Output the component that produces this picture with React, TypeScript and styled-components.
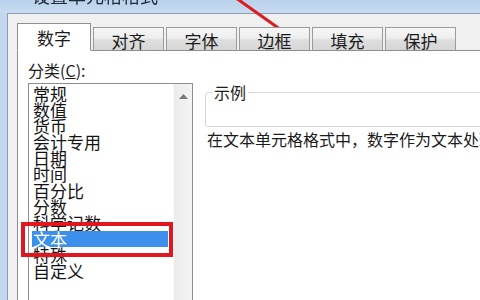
import React from "react";
import styled, { createGlobalStyle } from "styled-components";

const GlobalStyle = createGlobalStyle`
  html, body {
    margin: 0;
    padding: 0;
    width: 480px;
    height: 300px;
    overflow: hidden;
    background: #c9dcf0;
  }
  * { box-sizing: border-box; }
`;

const cjk = `"Noto Sans CJK SC", "Noto Sans", sans-serif`;

const Screen = styled.div`
  position: relative;
  width: 480px;
  height: 300px;
  overflow: hidden;
  font-family: ${cjk};
  color: #1b1b1b;
`;

const TitleBar = styled.div`
  height: 13px;
  overflow: hidden;
  padding-left: 32px;
  background: linear-gradient(#b9d1ea, #c8dcf1);
`;

const TitleText = styled.div`
  margin-top: -14px;
  font-size: 18px;
  line-height: 18px;
  color: #1e2a36;
  filter: blur(0.6px);
`;

const Frame = styled.div`
  display: flex;
  width: 540px;
  height: 287px;
  padding-left: 7px;
  background: linear-gradient(90deg, #c3d8ef, #d6e5f5);
`;

const Dialog = styled.div`
  flex: 1;
  display: flex;
  flex-direction: column;
  background: #f0f0f0;
  border-top: 1px solid #8d9cae;
  border-left: 1px solid #8d9cae;
  padding: 9px 0 0 9px;
`;

const TabRow = styled.div`
  display: flex;
  align-items: flex-end;
  gap: 2px;
  height: 28px;
  margin-bottom: -1px;
  position: relative;
  z-index: 1;
`;

const Tab = styled.div<{ $active?: boolean }>`
  width: ${(p) => (p.$active ? 74 : 71)}px;
  height: ${(p) => (p.$active ? 28 : 24)}px;
  display: flex;
  align-items: center;
  justify-content: center;
  font-size: 17px;
  line-height: 17px;
  padding-top: ${(p) => (p.$active ? 1 : 2)}px;
  border: 1px solid ${(p) => (p.$active ? "#8c8e94" : "#9a9b9d")};
  border-bottom: ${(p) => (p.$active ? "1px solid #ffffff" : "1px solid #8c8e94")};
  background: ${(p) =>
    p.$active ? "#ffffff" : "linear-gradient(#f6f6f6 0%, #eeeeee 45%, #dedede 55%, #d6d6d6 100%)"};
  color: #1b1b1b;
`;

const Panel = styled.div`
  flex: 1;
  display: flex;
  gap: 12px;
  background: #ffffff;
  border-top: 1px solid #8c8e94;
  border-left: 1px solid #8c8e94;
  padding: 11px 0 0 10px;
`;

const LeftCol = styled.div`
  display: flex;
  flex-direction: column;
  width: 165px;
`;

const FieldLabel = styled.div`
  font-size: 16px;
  line-height: 16px;
  height: 21px;
  u { text-decoration: underline; }
`;

const ListBox = styled.div`
  flex: 1;
  display: flex;
  border: 1px solid #8a8d93;
  border-bottom: none;
`;

const ListItems = styled.div`
  flex: 1;
  display: flex;
  flex-direction: column;
  padding: 2px 5px 0 3px;
`;

const ListItem = styled.div<{ $selected?: boolean }>`
  height: 16.1px;
  font-size: 17px;
  line-height: 16px;
  padding-left: 1px;
  white-space: nowrap;
  color: ${(p) => (p.$selected ? "#ffffff" : "#141414")};
  background: ${(p) => (p.$selected ? "#3c8fea" : "transparent")};
`;

const ScrollBar = styled.div`
  width: 19px;
  display: flex;
  justify-content: center;
  padding-top: 10px;
  background: linear-gradient(90deg, #ececec, #f3f3f3);
  border-left: 1px solid #f7f7f7;
`;

const RightCol = styled.div`
  flex: 1;
  display: flex;
  flex-direction: column;
  padding-top: 22px;
`;

const GroupBox = styled.fieldset`
  margin: 0;
  height: 43px;
  padding: 0 6px;
  border: 1px solid #d6d6d6;
  border-radius: 3px;
`;

const Legend = styled.legend`
  padding: 0 2px;
  font-size: 16px;
  line-height: 16px;
  color: #1b1b1b;
`;

const Description = styled.div`
  margin-top: 4px;
  padding-left: 2px;
  font-size: 16px;
  line-height: 16px;
  white-space: nowrap;
`;

const Highlight = styled.div`
  position: absolute;
  left: 21px;
  top: 222px;
  width: 152px;
  height: 35px;
  border: 4px solid #e0171f;
`;

const Arrow = styled.svg`
  position: absolute;
  left: 0;
  top: 0;
`;

const tabs = ["数字", "对齐", "字体", "边框", "填充", "保护"];
const items = ["常规", "数值", "货币", "会计专用", "日期", "时间", "百分比", "分数", "科学记数", "文本", "特殊", "自定义"];

export default function App() {
  return (
    <Screen>
      <GlobalStyle />
      <TitleBar>
        <TitleText>设置单元格格式</TitleText>
      </TitleBar>
      <Frame>
        <Dialog>
          <TabRow>
            {tabs.map((t, i) => (
              <Tab key={t} $active={i === 0}>
                {t}
              </Tab>
            ))}
          </TabRow>
          <Panel>
            <LeftCol>
              <FieldLabel>
                分类(<u>C</u>):
              </FieldLabel>
              <ListBox>
                <ListItems>
                  {items.map((it) => (
                    <ListItem key={it} $selected={it === "文本"}>
                      {it}
                    </ListItem>
                  ))}
                </ListItems>
                <ScrollBar>
                  <svg width="9" height="5" viewBox="0 0 9 5">
                    <path d="M0 5 L4.5 0 L9 5 Z" fill="#7a7a7a" />
                  </svg>
                </ScrollBar>
              </ListBox>
            </LeftCol>
            <RightCol>
              <GroupBox>
                <Legend>示例</Legend>
              </GroupBox>
              <Description>在文本单元格格式中，数字作为文本处理。</Description>
            </RightCol>
          </Panel>
        </Dialog>
      </Frame>
      <Highlight />
      <Arrow width="480" height="300">
        <line x1="236" y1="-2" x2="284" y2="32" stroke="#de1a1f" strokeWidth="3" strokeLinecap="round" />
      </Arrow>
    </Screen>
  );
}
